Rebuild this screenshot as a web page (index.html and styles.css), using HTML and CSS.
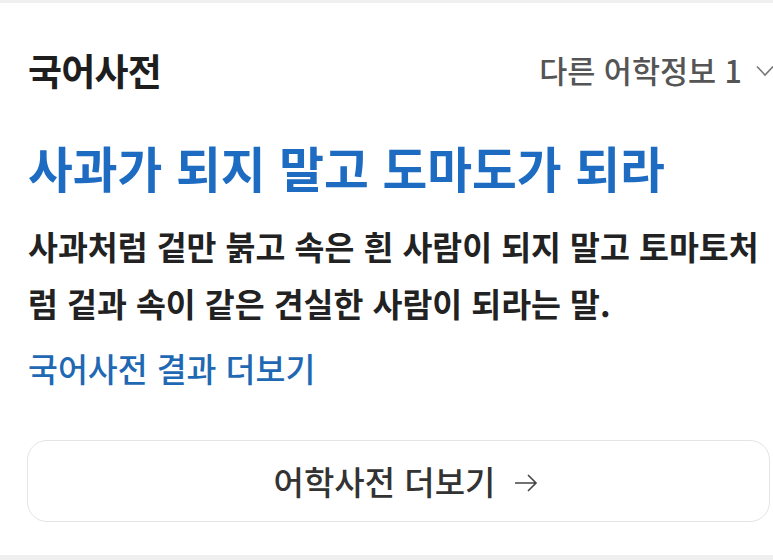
FILE: index.html
```html
<!DOCTYPE html>
<html lang="ko">
<head>
<meta charset="utf-8">
<link rel="stylesheet" href="styles.css">
</head>
<body>
<div class="topbar"></div>
<section class="card">
  <div class="header">
    <h2 class="section-title">국어사전</h2>
    <div class="other">
      <span>다른 어학정보 1</span>
      <svg class="chev" width="18" height="12" viewBox="0 0 18 12"><path d="M1 1.5 L9 10 L17 1.5" fill="none" stroke="#777" stroke-width="1.6"/></svg>
    </div>
  </div>
  <h1 class="entry">사과가 되지 말고 도마도가 되라</h1>
  <p class="desc">사과처럼 겉만 붉고 속은 흰 사람이 되지 말고 토마토처럼 겉과 속이 같은 견실한 사람이 되라는 말.</p>
  <a class="more-link" href="#">국어사전 결과 더보기</a>
  <a class="more-btn" href="#">어학사전 더보기
    <svg class="arrow" width="26" height="22" viewBox="0 0 26 22"><path d="M2 11 H23 M15 3 L23 11 L15 19" fill="none" stroke="#444" stroke-width="1.6"/></svg>
  </a>
</section>
<div class="bottombar"></div>
</body>
</html>
```
FILE: styles.css
```css
html, body {
  margin: 0;
  padding: 0;
  background: #fff;
  overflow: hidden;
  width: 773px;
  height: 560px;
  font-family: "Noto Sans CJK KR", "Noto Sans", sans-serif;
}
.topbar {
  height: 3px;
  background: #efefef;
}
.card {
  padding: 0 3px 0 28px;
  height: 552px;
  box-sizing: border-box;
  display: flex;
  flex-direction: column;
}
.header {
  margin-top: 45px;
  display: flex;
  justify-content: space-between;
  align-items: center;
  height: 44px;
  margin-right: -4px;
}
.section-title {
  margin: 0;
  font-size: 37px;
  line-height: 44px;
  font-weight: 700;
  color: #1e1e1e;
  letter-spacing: -0.8px;
}
.other {
  display: flex;
  align-items: center;
  gap: 14px;
  font-size: 30.5px;
  line-height: 44px;
  color: #555;
  font-weight: 500;
  letter-spacing: 0;
}
.chev {
  margin-top: 2px;
}
.entry {
  margin: 48px 0 0;
  font-size: 48.7px;
  line-height: 54px;
  font-weight: 700;
  color: #1d6cc2;
  letter-spacing: 0;
}
.desc {
  margin: 23px 0 0;
  font-size: 32.5px;
  line-height: 57px;
  font-weight: 600;
  color: #222;
  letter-spacing: 0;
}
.more-link {
  margin-top: 17px;
  font-size: 32.5px;
  line-height: 40px;
  font-weight: 500;
  color: #1f68b3;
  text-decoration: none;
  letter-spacing: 0;
  align-self: flex-start;
}
.more-btn {
  margin-top: 52px;
  margin-left: -1px;
  height: 82px;
  box-sizing: border-box;
  padding-left: 16px;
  border: 1.5px solid #e4e4e4;
  border-radius: 20px;
  display: flex;
  align-items: center;
  justify-content: center;
  gap: 18px;
  font-size: 33px;
  font-weight: 500;
  color: #333;
  text-decoration: none;
  letter-spacing: 0;
}
.arrow {
  margin-top: 3px;
}
.bottombar {
  height: 5px;
  background: #efefef;
}
```
